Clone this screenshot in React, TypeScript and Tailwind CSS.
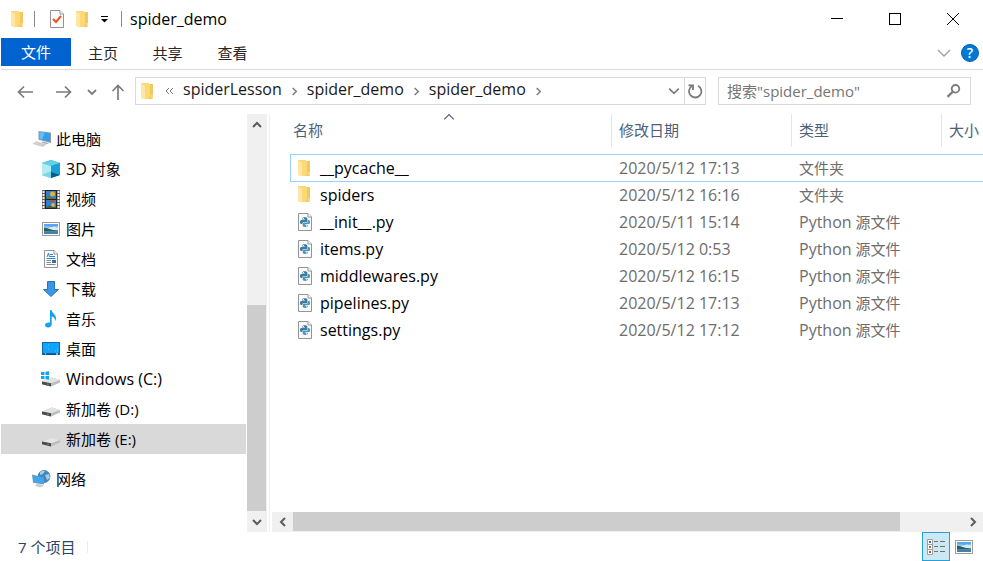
import type { ReactNode } from 'react';
import clsx from 'clsx';

const FolderIcon = () => <svg width="13" height="17" viewBox="0 0 13 17">
    <path d="M0 0H8V1H12V15L11 16H4L0 15Z" fill="#fbd976" />
    <path d="M9 1H12V15L11 16H8L9 13Z" fill="#f3c862" />
    <path d="M0 0.5L4 3V16.5L0 15Z" fill="#fee7a4" />
    <path d="M10 12h2v3h-2z" fill="#f9dc8a" />
</svg>

const PageShape = () => <>
    <path d="M0.5 0.5H10L13.5 4V17.5H0.5Z" fill="#fafafa" stroke="#949494" />
    <path d="M10 0.5V4H13.5" fill="#fff" stroke="#949494" />
</>

const PythonFileIcon = () => <svg width="14" height="18" viewBox="0 0 14 18">
    <PageShape />
    <path d="M4.2 6.2C4.2 4.6 5 4.2 6.8 4.2S9.4 4.8 9.4 6V8.2C9.4 9 8.9 9.3 8.2 9.3H5.6C4.6 9.3 4.3 9.8 4.3 11H3.2C2.3 11 2 10.2 2 9S2.4 7.1 3.4 7.1H7V6.5H4.2Z" fill="#3a7ca5" />
    <path d="M9.8 7.1H10.8C11.7 7.1 12 8 12 9.2S11.5 11.1 10.6 11.1H7.1V11.7H9.8V12.3C9.8 13.5 8.9 14 7.1 14S4.7 13.4 4.7 12.3V11C4.7 10.2 5.2 9.8 5.9 9.8H8.4C9.3 9.8 9.8 9.2 9.8 8.4Z" fill="#4d97b5" />
    <rect x="5" y="5" width="1" height="1" fill="#fff" />
    <rect x="8" y="12.3" width="1" height="1" fill="#fff" />
</svg>

const PropertiesIcon = () => <svg width="14" height="18" viewBox="0 0 14 18">
    <PageShape />
    <path d="M3 9L6 12L11 6" fill="none" stroke="#e9561f" strokeWidth="2" />
</svg>

const ComputerIcon = () => <svg width="20" height="18" viewBox="0 0 20 18">
    <path d="M6.5 1L19 2.5V13L6.5 9.8Z" fill="#8a99a6" />
    <path d="M7.5 2L18 3.4V11.4L7.5 8.8Z" fill="#2ea0ee" />
    <path d="M7.5 2L13 2.8L10 9.4L7.5 8.8Z" fill="#63bdf7" />
    <path d="M10 11.5L15 12.5L17 14H10Z" fill="#a9b1b6" />
    <path d="M4 11L15 14L11 17L0 14Z" fill="#d9dbdd" />
    <path d="M2 13.5L12 16M4 12.5L13.5 15" stroke="#b9bdc0" strokeWidth="0.6" />
</svg>

const CubeIcon = () => <svg width="18" height="18" viewBox="0 0 18 18">
    <path d="M9 0L18 3V15L9 18L0 15V3Z" fill="#22a7cf" />
    <path d="M9 0L18 3L9 6L0 3Z" fill="#5fd0e6" />
    <path d="M0 3L9 6V18L0 15Z" fill="#b4ebf3" />
    <path d="M0 15L9 11V18Z" fill="#79d8e6" />
    <path d="M9 6L18 3V15L9 12Z" fill="#1ba0d6" />
    <path d="M9 12L18 15L9 18Z" fill="#0b5a87" />
</svg>

const VideoIcon = () => <svg width="18" height="19" viewBox="0 0 18 19">
    <rect width="18" height="19" fill="#606060" />
    <path d="M1.5 1V19M16.5 1V19" stroke="#eee" strokeWidth="2" strokeDasharray="2 1" />
    <rect x="3.5" y="0.5" width="11" height="8.5" fill="#377bd4" stroke="#222" />
    <rect x="3.5" y="9.5" width="11" height="9" fill="#377bd4" stroke="#222" />
    <circle cx="10.5" cy="4" r="2.5" fill="#d8b43c" />
    <path d="M4 7L7 6L10 8H14V9H4Z" fill="#4f7f3b" />
    <path d="M7 12L10 10H13L11 12Z" fill="#c9473a" />
    <circle cx="11" cy="15" r="2" fill="#d8b43c" />
    <path d="M4 17L8 15.5L11 17H14V18H4Z" fill="#3a663d" />
</svg>

const PictureIcon = () => <svg width="18" height="14" viewBox="0 0 18 14">
    <rect x="0.5" y="0.5" width="17" height="13" fill="#fff" stroke="#9a9a9a" />
    <rect x="2" y="2" width="14" height="10" fill="#8cc8f5" />
    <path d="M2 2H16V4L10 5L2 4Z" fill="#5aa5ec" />
    <path d="M6 6L12 4.5L16 6V8H6Z" fill="#d8ecf8" />
    <path d="M2 5.5L6 6.5L11 8L16 8.5V9.5H2Z" fill="#2f5d55" />
    <path d="M2 9.5H16V12H2Z" fill="#3f83ad" />
</svg>

const DocumentIcon = () => <svg width="14" height="18" viewBox="0 0 14 18" className="ml-0.5">
    <PageShape />
    <path d="M3 7L4.5 3L5.5 7M6 4.5H9M6 6.5H11M2.5 8.5H11.5" fill="none" stroke="#3286cf" />
    <path d="M2.5 10.5H7M2.5 12.5H7M2.5 14.5H11.5" stroke="#8a8a8a" />
    <rect x="8" y="10" width="4" height="3" fill="#3d6f91" />
</svg>

const DownloadIcon = () => <svg width="18" height="18" viewBox="0 0 18 18">
    <path d="M5.5 1.5H12.5V9.5H16.5L9 16.5L1.5 9.5H5.5Z" fill="#3b97e3" stroke="#2874bb" />
</svg>

const MusicIcon = () => <svg width="18" height="18" viewBox="0 0 18 18">
    <path d="M8 0H9.5C10 3 14 4.5 14 8C14 9.5 13.5 10.5 13 11C13.2 8.5 12 7 9.7 6.5V14.5C9.7 16.3 8 17.5 6 17.5C4.2 17.5 3 16.5 3 15.1C3 13.3 5 12 8 12.5Z" fill="#17a1f5" />
</svg>

const DesktopIcon = () => <svg width="18" height="14" viewBox="0 0 18 14">
    <rect x="0.5" y="0.5" width="17" height="12" fill="#12a3fb" stroke="#0f6cb0" />
    <path d="M1 12H17" stroke="#0b4d80" strokeWidth="1.5" />
    <path d="M3 12H4M14 12H16" stroke="#fff" />
    <path d="M4 5h1M6 3h1M6 7h1M13 9h1M15 7h1M15 9h1" stroke="#5fc4fd" />
</svg>

const DriveIcon = ({ system }: { system?: boolean }) => <svg width="20" height="16" viewBox="0 0 20 16" className="-ml-px">
    <path d="M1 10.5L11 6.5L19 9V11.5L10 15.5L1 13.2Z" fill="#bdbdbd" />
    <path d="M1 10.5L11 6.5L19 9L10 12.3Z" fill="#e4e4e4" />
    <path d="M1 10.5L10 12.3V15.5L1 13.2Z" fill="#4b4b4b" />
    <rect x="6" y="12.6" width="2" height="1.2" fill="#36a35a" />
    {
        system && <>
            <path d="M0 0.5H8.5V9H0Z" fill="#fff" />
            <path d="M0 1.2L3.5 0.8V4H0ZM4.5 0.7L8 0.3V4H4.5ZM0 5H3.5V8.2L0 7.8ZM4.5 5H8V8.7L4.5 8.3Z" fill="#11a3f2" />
        </>
    }
</svg>

const NetworkIcon = () => <svg width="19" height="18" viewBox="0 0 19 18">
    <circle cx="12" cy="6.5" r="6.4" fill="#3f87bd" />
    <path d="M8 2C10 0.5 12 0.5 13 1L11 4L8 5ZM13 5L17 4L18 8L15 10Z" fill="#a5cfe2" />
    <path d="M0 4.5L12 7.5V14.5L1 12.8Z" fill="#7397af" />
    <path d="M1 5.6L11 8.2V13.3L1.8 11.8Z" fill="#39a9f5" />
    <path d="M5 13.6L9 14.2L12 16L8 17.5L3 16Z" fill="#c9ced1" />
</svg>

type TChevron = {
    dir: 'up' | 'down' | 'left' | 'right';
    className?: string;
    size?: number;
    weight?: number
}
const chevronPaths = {
    up: 'M1 7L5 3L9 7',
    down: 'M1 3L5 7L9 3',
    left: 'M7 1L3 5L7 9',
    right: 'M3 1L7 5L3 9'
}
const Chevron = ({ dir, className, size = 10, weight = 1.5 }: TChevron) => <svg width={size} height={size} viewBox="0 0 10 10" className={className}>
    <path d={chevronPaths[dir]} fill="none" stroke="currentColor" strokeWidth={weight} />
</svg>

const Arrow = ({ d }: { d: string }) => <svg width="16" height="16" viewBox="0 0 16 16">
    <path d={d} fill="none" stroke="currentColor" strokeWidth="1.7" />
</svg>

type TNavItem = { label: ReactNode; icon: ReactNode; root?: boolean; selected?: boolean }
const navItems: TNavItem[] = [
    { label: '此电脑', icon: <ComputerIcon />, root: true },
    { label: <><span className="text-[16px]">3D</span> 对象</>, icon: <CubeIcon /> },
    { label: '视频', icon: <VideoIcon /> },
    { label: '图片', icon: <PictureIcon /> },
    { label: '文档', icon: <DocumentIcon /> },
    { label: '下载', icon: <DownloadIcon /> },
    { label: '音乐', icon: <MusicIcon /> },
    { label: '桌面', icon: <DesktopIcon /> },
    { label: <span className="text-[16px]">Windows (C:)</span>, icon: <DriveIcon system /> },
    { label: '新加卷 (D:)', icon: <DriveIcon /> },
    { label: '新加卷 (E:)', icon: <DriveIcon />, selected: true }
]

const files = [
    { name: '__pycache__', date: '2020/5/12 17:13', folder: true },
    { name: 'spiders', date: '2020/5/12 16:16', folder: true },
    { name: '__init__.py', date: '2020/5/11 15:14' },
    { name: 'items.py', date: '2020/5/12 0:53' },
    { name: 'middlewares.py', date: '2020/5/12 16:15' },
    { name: 'pipelines.py', date: '2020/5/12 17:13' },
    { name: 'settings.py', date: '2020/5/12 17:12' }
]

const NavItem = ({ label, icon, root, selected }: TNavItem) => <li>
    <button className={clsx('flex h-[30px] w-full items-center gap-1 whitespace-nowrap text-left', root ? 'pl-[31px]' : 'pl-[41px]', selected && 'bg-[#d9d9d9]')}>
        <span className="flex w-5 shrink-0">{icon}</span>
        <span>{label}</span>
    </button>
</li>

const TitleBar = () => <header className="flex h-[38px] shrink-0 items-center pr-px pl-2.5">
    <FolderIcon />
    <div className="ml-2.5 h-4 w-px bg-[#8c8c8c]"></div>
    <div className="ml-[15px] flex items-center gap-3">
        <button aria-label="属性"><PropertiesIcon /></button>
        <button aria-label="新建文件夹"><FolderIcon /></button>
        <button aria-label="自定义快速访问工具栏">
            <svg width="8" height="8" viewBox="0 0 8 8"><path d="M0 4H7L3.5 7.5Z" fill="#000" /><path d="M0 1.5H7" stroke="#000" /></svg>
        </button>
    </div>
    <div className="ml-3 h-4 w-px bg-[#8c8c8c]"></div>
    <h1 className="ml-2 flex-1 text-[16px] text-black">spider_demo</h1>
    <button aria-label="最小化" className="flex h-full w-[58px] items-center justify-center">
        <svg width="12" height="12"><path d="M0 5.5H12" stroke="#000" /></svg>
    </button>
    <button aria-label="最大化" className="flex h-full w-[58px] items-center justify-center">
        <svg width="12" height="12"><rect x="0.5" y="0.5" width="11" height="11" fill="none" stroke="#000" /></svg>
    </button>
    <button aria-label="关闭" className="flex h-full w-[58px] items-center justify-center">
        <svg width="12" height="12"><path d="M0 0L12 12M12 0L0 12" stroke="#000" /></svg>
    </button>
</header>

const Ribbon = () => <nav className="flex h-8 shrink-0 items-start border-b border-[#dadbdc] text-[#262626]">
    <button className="h-7 w-[70px] bg-[#0063cf] text-white">文件</button>
    <button className="h-7 w-16 pt-0.5">主页</button>
    <button className="h-7 w-[65px] pt-0.5">共享</button>
    <button className="h-7 w-[65px] pt-0.5">查看</button>
    <button aria-label="展开功能区" className="ml-auto flex h-7 items-center pt-0.5 text-[#a0a0a0]">
        <svg width="14" height="8" viewBox="0 0 14 8"><path d="M1 1L7 7L13 1" fill="none" stroke="currentColor" strokeWidth="1.4" /></svg>
    </button>
    <button aria-label="帮助" className="mr-1 ml-2.5 flex h-[30px] items-center">
        <span className="flex size-[18px] items-center justify-center rounded-full border border-[#0a5fae] bg-[#0078d7] text-[14px] leading-none font-semibold text-white">?</span>
    </button>
</nav>

const AddressBar = () => {
    const crumbs = ['spiderLesson', 'spider_demo', 'spider_demo'];
    return <div className="flex h-11 shrink-0 items-start pt-[7px] pr-3 pl-1 text-[#7b7b7b]">
        <button aria-label="后退" className="flex h-[30px] w-10 items-center justify-center"><Arrow d="M16 8H1.5M7 2.5L1.5 8L7 13.5" /></button>
        <button aria-label="前进" className="flex h-[30px] w-[38px] items-center justify-center"><Arrow d="M0 8H14.5M9 2.5L14.5 8L9 13.5" /></button>
        <button aria-label="最近浏览的位置" className="flex h-[30px] w-[18px] items-center justify-center"><Chevron dir="down" weight={1.8} /></button>
        <button aria-label="上移" className="flex h-[30px] w-[34px] items-center justify-center"><Arrow d="M8 16V1.5M2.5 7L8 1.5L13.5 7" /></button>
        <div className="flex h-7 min-w-0 flex-1 items-center border border-[#d9d9d9] pl-[5px]">
            <FolderIcon />
            <button aria-label="更多" className="mr-0.5 ml-[11px]">
                <svg width="8" height="8" viewBox="0 0 8 8"><path d="M4 1L1 4L4 7M8 1L5 4L8 7" fill="none" stroke="currentColor" /></svg>
            </button>
            {
                crumbs.map((crumb, i) => <div key={i} className="flex items-center">
                    <button className="ml-2 pb-1 text-[16px] leading-5 text-[#1a1a1a]">{crumb}</button>
                    <Chevron dir="right" size={9} weight={1.6} className="ml-2" />
                </div>)
            }
            <button aria-label="上一个位置" className="ml-auto flex h-full w-5 items-center justify-center"><Chevron dir="down" size={12} weight={1.4} /></button>
            <button aria-label="刷新" className="flex h-full w-[21px] items-center justify-center border-l border-[#d9d9d9]">
                <svg width="16" height="16" viewBox="0 0 16 16">
                    <path d="M11 2.8A6.2 6.2 0 1 1 5 3" fill="none" stroke="currentColor" strokeWidth="1.8" />
                    <path d="M1.5 2.3H6V7" fill="none" stroke="currentColor" strokeWidth="1.8" />
                </svg>
            </button>
        </div>
        <div className="ml-3 flex h-7 w-[253px] items-center border border-[#d9d9d9] px-2">
            <input aria-label="搜索" placeholder={'搜索"spider_demo"'} className="min-w-0 flex-1 text-[15px] outline-none placeholder:text-[#757575]" />
            <button aria-label="开始搜索">
                <svg width="16" height="16" viewBox="0 0 16 16">
                    <circle cx="9.5" cy="5.8" r="3.8" fill="none" stroke="currentColor" strokeWidth="1.8" />
                    <path d="M6.7 8.7L1.5 13.9" stroke="currentColor" strokeWidth="2.2" />
                </svg>
            </button>
        </div>
    </div>
}

const NavPane = () => <aside className="flex w-[266px] shrink-0">
    <div className="min-w-0 flex-1 overflow-hidden pt-2.5 text-black">
        <ul>{navItems.map((item, i) => <NavItem key={i} {...item} />)}</ul>
        <ul className="mt-2.5"><NavItem label="网络" icon={<NetworkIcon />} root /></ul>
    </div>
    <div className="ml-px flex w-5 flex-col bg-[#f0f0f0] text-[#5c5c5c]">
        <button aria-label="向上滚动" className="flex h-[21px] items-center justify-center"><Chevron dir="up" weight={2} /></button>
        <div className="flex-[170]"></div>
        <div className="mr-px flex-[206] bg-[#cdcdcd]"></div>
        <button aria-label="向下滚动" className="flex h-[21px] items-center justify-center"><Chevron dir="down" weight={2} /></button>
    </div>
</aside>

const FileTable = () => <table className="w-full table-fixed border-separate border-spacing-0 whitespace-nowrap">
    <colgroup>
        <col />
        <col className="w-[180px]" />
        <col className="w-[150px]" />
        <col className="w-[42px]" />
    </colgroup>
    <thead className="text-left text-[#4c607a]">
        <tr className="h-[33px]">
            <th className="relative pb-0.5 pl-[3px] font-normal">
                名称
                <Chevron dir="up" size={12} weight={1} className="absolute -top-[3px] left-1/2 -translate-x-2" />
            </th>
            <th className="border-l border-[#e5e5e5] pb-0.5 pl-[7px] font-normal">修改日期</th>
            <th className="border-l border-[#e5e5e5] pb-0.5 pl-[7px] font-normal">类型</th>
            <th className="border-l border-[#e5e5e5] pb-0.5 pl-[7px] font-normal">大小</th>
        </tr>
    </thead>
    <tbody className="text-[#6d6d6d]">
        <tr className="h-[7px]"><td colSpan={4}></td></tr>
        {
            files.map((file, i) => {
                const edge = i === 0 ? 'h-7 border-y border-[#99d1ff]' : 'h-[27px] border-transparent pb-0.5';
                return <tr key={file.name}>
                    <td className={clsx('border-l pl-[7px]', edge)}>
                        <div className="flex items-center gap-1.5">
                            <span className="flex w-4">{file.folder ? <FolderIcon /> : <PythonFileIcon />}</span>
                            <span className="text-[16px] leading-6 text-black">{file.name}</span>
                        </div>
                    </td>
                    <td className={clsx('pl-2 text-[16px] leading-6', edge)}>{file.date}</td>
                    <td className={clsx('pl-2', edge)}>{file.folder ? '文件夹' : <><span className="text-[16px] leading-6">Python</span> 源文件</>}</td>
                    <td className={edge}></td>
                </tr>
            })
        }
    </tbody>
</table>

const StatusBar = () => <footer className="flex h-[29px] shrink-0 items-center pr-2.5 pl-[17px] text-[#2c4460]">
    <span>7 个项目</span>
    <div className="ml-3 h-3 w-px bg-[#ececec]"></div>
    <button aria-label="详细信息" className="ml-auto flex h-[29px] w-7 items-center justify-center border border-[#26a0da] bg-[#cce8f4]">
        <svg width="18" height="16" viewBox="0 0 18 16">
            <path d="M0.5 0.5H5.5V15.5H0.5ZM0.5 5.5H5.5M0.5 10.5H5.5" fill="#fff" stroke="#a0a0a0" />
            <path d="M7 2.5H11M13 2.5H18M7 7.5H11M13 7.5H18M7 12.5H11M13 12.5H18" stroke="#707070" />
            <rect x="2" y="2" width="2" height="2" fill="#3a6ea5" />
            <rect x="2" y="7" width="2" height="2" fill="#8a7a3a" />
            <rect x="2" y="12" width="2" height="2" fill="#c8452a" />
        </svg>
    </button>
    <button aria-label="大图标" className="ml-[5px] flex"><PictureIcon /></button>
</footer>

const App = () => {
    return <div className="flex h-screen w-full flex-col overflow-hidden bg-white pl-px font-['Open_Sans','Noto_Sans_CJK_SC',sans-serif] text-[15px] leading-5">
        <TitleBar />
        <Ribbon />
        <AddressBar />
        <div className="flex min-h-0 flex-1">
            <NavPane />
            <main className="ml-0.5 flex min-w-0 flex-1 flex-col border-l border-[#f0f0f0]">
                <div className="min-h-0 flex-1 overflow-hidden pl-5">
                    <FileTable />
                </div>
                <div className="ml-0.5 flex h-5 bg-[#f0f0f0] text-[#5c5c5c]">
                    <button aria-label="向左滚动" className="flex w-[21px] items-center justify-center"><Chevron dir="left" weight={2} /></button>
                    <div className="mb-px flex-[607] bg-[#cdcdcd]"></div>
                    <div className="flex-[62]"></div>
                    <button aria-label="向右滚动" className="flex w-[21px] items-center justify-center"><Chevron dir="right" weight={2} /></button>
                </div>
            </main>
        </div>
        <StatusBar />
    </div>
}

export default App
